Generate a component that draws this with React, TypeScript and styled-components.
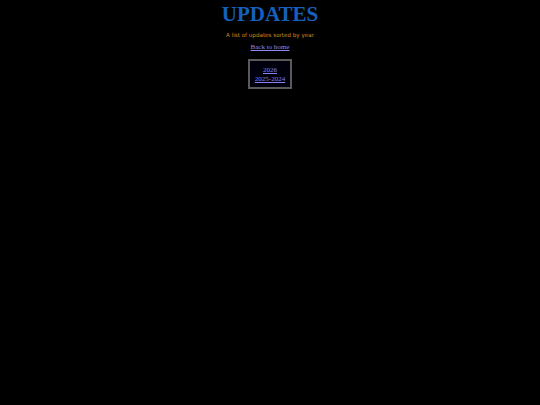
import React from "react";
import styled, { createGlobalStyle } from "styled-components";

const Global = createGlobalStyle`
  html, body { margin: 0; padding: 0; background: #000; }
  body { font-family: "Liberation Serif", serif; color: #ccc; }
`;

const Page = styled.main`
  display: flex;
  flex-direction: column;
  align-items: center;
  padding-top: 2px;
`;

const Title = styled.h1`
  margin: 0;
  font-family: "Liberation Serif", serif;
  font-weight: bold;
  font-size: 21px;
  line-height: 25px;
  color: #1560bd;
`;

const Subtitle = styled.p`
  margin: 4px 0 0;
  font-family: "DejaVu Sans", sans-serif;
  font-size: 5.6px;
  line-height: 8px;
  color: #d08a1a;
`;

const HomeLink = styled.a`
  margin-top: 4px;
  font-family: "Liberation Serif", serif;
  font-size: 7px;
  line-height: 9px;
  color: #8a8af0;
  text-decoration: underline;
`;

const YearBox = styled.nav`
  margin-top: 7px;
  width: 40px;
  padding: 5px 0 3px;
  border: 2px solid #5a5a5a;
  background: #00000c;
  display: flex;
  flex-direction: column;
  align-items: center;
  gap: 0;
`;

const YearLink = styled.a`
  font-family: "Liberation Serif", serif;
  font-size: 7px;
  line-height: 9px;
  color: #8080ee;
  text-decoration: underline;
`;

export default function App() {
  return (
    <>
      <Global />
      <Page>
        <Title>UPDATES</Title>
        <Subtitle>A list of updates sorted by year</Subtitle>
        <HomeLink href="#">Back to home</HomeLink>
        <YearBox>
          <YearLink href="#">2026</YearLink>
          <YearLink href="#">2025-2024</YearLink>
        </YearBox>
      </Page>
    </>
  );
}
